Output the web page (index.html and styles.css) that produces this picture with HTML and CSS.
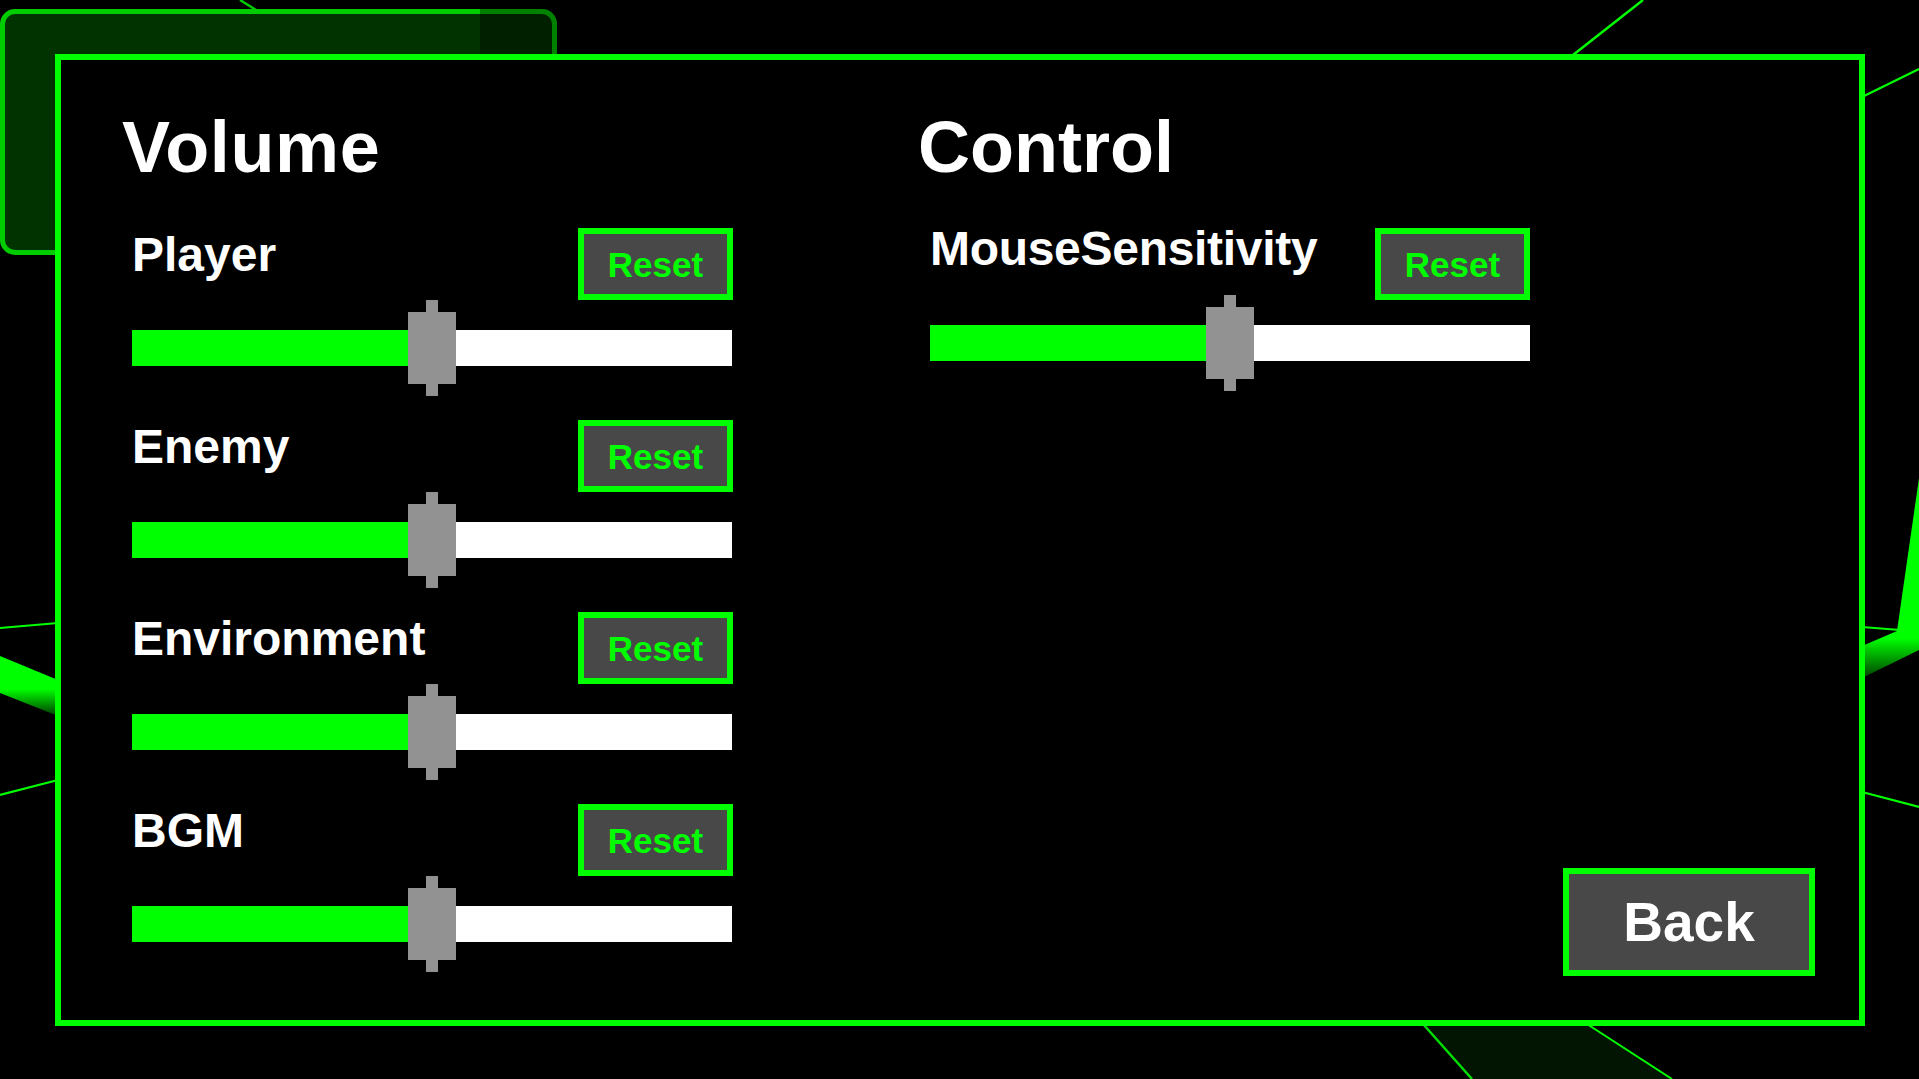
FILE: index.html
```html
<!DOCTYPE html>
<html lang="en">
<head>
<meta charset="utf-8">
<title>Settings</title>
<link rel="stylesheet" href="styles.css">
</head>
<body>
<div class="screen">
  <svg class="bg-art" width="1919" height="1079" viewBox="0 0 1919 1079" aria-hidden="true">
    <defs>
      <linearGradient id="bandL" x1="0" y1="0" x2="0" y2="1">
        <stop offset="0" stop-color="#00ff00"/>
        <stop offset="0.55" stop-color="#00ff00"/>
        <stop offset="1" stop-color="#003a00"/>
      </linearGradient>
      <linearGradient id="bandR" x1="0" y1="0" x2="0" y2="1">
        <stop offset="0" stop-color="#00ff00"/>
        <stop offset="0.8" stop-color="#00ff00"/>
        <stop offset="1" stop-color="#004000"/>
      </linearGradient>
    </defs>
    <line x1="240" y1="0" x2="256" y2="10" stroke="#00cc00" stroke-width="2.5"/>
    <line x1="1643" y1="0" x2="1573" y2="55" stroke="#00ff00" stroke-width="2.5"/>
    <line x1="1919" y1="69" x2="1862" y2="97" stroke="#00ff00" stroke-width="2.2"/>
    <line x1="0" y1="628" x2="58" y2="623" stroke="#00ff00" stroke-width="2.2"/>
    <polygon points="0,656 58,680 58,716 0,693" fill="url(#bandL)"/>
    <line x1="0" y1="795" x2="58" y2="780" stroke="#00ff00" stroke-width="2.2"/>
    <line x1="1862" y1="627" x2="1900" y2="630" stroke="#00ff00" stroke-width="2"/>
    <polygon points="1862,646 1897,631 1919,478 1919,650 1862,678" fill="url(#bandR)"/>
    <line x1="1862" y1="792" x2="1919" y2="807" stroke="#00ff00" stroke-width="2.2"/>
    <polygon points="1423,1024 1587,1024 1672,1079 1472,1079" fill="#021402"/>
    <line x1="1423" y1="1024" x2="1472" y2="1079" stroke="#00dd00" stroke-width="2.5"/>
    <line x1="1587" y1="1024" x2="1672" y2="1079" stroke="#00ff00" stroke-width="2"/>
  </svg>
  <div class="back-window"></div>
  <div class="back-window-shade"></div>

  <main class="panel">
    <section class="col col-volume">
      <h1 class="title">Volume</h1>
      <div class="rows">
        <div class="row">
          <div class="row-head">
            <span class="label">Player</span>
            <button class="reset">Reset</button>
          </div>
          <div class="slider">
            <div class="track"><div class="fill" style="width:50%"></div><div class="rest"></div></div>
            <div class="handle" style="left:50%"></div>
          </div>
        </div>
        <div class="row">
          <div class="row-head">
            <span class="label">Enemy</span>
            <button class="reset">Reset</button>
          </div>
          <div class="slider">
            <div class="track"><div class="fill" style="width:50%"></div><div class="rest"></div></div>
            <div class="handle" style="left:50%"></div>
          </div>
        </div>
        <div class="row">
          <div class="row-head">
            <span class="label">Environment</span>
            <button class="reset">Reset</button>
          </div>
          <div class="slider">
            <div class="track"><div class="fill" style="width:50%"></div><div class="rest"></div></div>
            <div class="handle" style="left:50%"></div>
          </div>
        </div>
        <div class="row">
          <div class="row-head">
            <span class="label">BGM</span>
            <button class="reset">Reset</button>
          </div>
          <div class="slider">
            <div class="track"><div class="fill" style="width:50%"></div><div class="rest"></div></div>
            <div class="handle" style="left:50%"></div>
          </div>
        </div>
      </div>
    </section>

    <section class="col col-control">
      <h1 class="title">Control</h1>
      <div class="rows">
        <div class="row">
          <div class="row-head">
            <span class="label label-up">MouseSensitivity</span>
            <button class="reset">Reset</button>
          </div>
          <div class="slider slider-up">
            <div class="track"><div class="fill" style="width:50%"></div><div class="rest"></div></div>
            <div class="handle" style="left:50%"></div>
          </div>
        </div>
      </div>
    </section>

    <div class="col-back">
      <button class="back">Back</button>
    </div>
  </main>
</div>
</body>
</html>
```

FILE: styles.css
```css
* { box-sizing: border-box; }

html, body {
  margin: 0;
  padding: 0;
  background: #000;
}

body {
  font-family: "Liberation Sans", Arial, sans-serif;
  font-weight: bold;
  color: #fff;
}

.screen {
  position: relative;
  width: 1919px;
  height: 1079px;
  overflow: hidden;
  background: #000;
  padding: 54px 0 0 55px;
}

.bg-art {
  position: absolute;
  left: 0;
  top: 0;
  z-index: 0;
}

.back-window {
  position: absolute;
  left: 0;
  top: 9px;
  width: 557px;
  height: 246px;
  border: 5px solid #00cc00;
  border-radius: 15px;
  background: #003300;
  z-index: 0;
}

.back-window-shade {
  position: absolute;
  left: 480px;
  top: 9px;
  width: 77px;
  height: 246px;
  border-radius: 0 15px 15px 0;
  background: rgba(0, 0, 0, 0.36);
  z-index: 0;
}

.panel {
  position: relative;
  z-index: 1;
  width: 1810px;
  height: 972px;
  border: 6px solid #00ff00;
  background: #000;
  display: flex;
  padding: 51px 44px 44px 61px;
}

.col {
  display: flex;
  flex-direction: column;
}

.col-volume {
  width: 611px;
}

.col-volume .rows {
  padding-left: 10px;
}

.col-control {
  width: 614px;
  margin-left: 185px;
}

.col-control .rows {
  padding-left: 12px;
}

.title {
  margin: 0 0 45px 0;
  font-size: 72px;
  line-height: 72px;
  height: 72px;
  font-weight: bold;
  color: #fff;
}

.col-volume .title {
  letter-spacing: 0.6px;
}

.rows {
  display: flex;
  flex-direction: column;
  gap: 24px;
}

.row {
  width: 601px;
  display: flex;
  flex-direction: column;
}

.col-control .row {
  width: 600px;
}

.row-head {
  display: flex;
  justify-content: space-between;
  align-items: flex-start;
  height: 72px;
}

.label {
  font-size: 48px;
  line-height: 48px;
  margin-top: 3px;
  white-space: nowrap;
}

.label-up {
  margin-top: -3px;
  letter-spacing: -0.3px;
}

.reset {
  width: 155px;
  height: 72px;
  border: 6px solid #00ff00;
  background: #484848;
  color: #00ff00;
  font-family: "Liberation Sans", Arial, sans-serif;
  font-weight: bold;
  font-size: 35px;
  line-height: 35px;
  padding: 0;
  display: flex;
  align-items: center;
  justify-content: center;
}

.slider {
  position: relative;
  width: 600px;
  height: 96px;
}

.slider-up {
  margin-top: -5px;
}

.track {
  display: flex;
  height: 36px;
  margin-top: 30px;
}

.fill {
  background: #00ff00;
}

.rest {
  flex: 1;
  background: #ffffff;
}

.handle {
  position: absolute;
  top: 12px;
  width: 48px;
  height: 72px;
  margin-left: -24px;
  background: #929292;
}

.handle::before {
  content: "";
  position: absolute;
  left: 18px;
  top: -12px;
  width: 12px;
  height: 96px;
  background: #929292;
}

.col-back {
  flex: 1;
  display: flex;
  justify-content: flex-end;
  align-items: flex-end;
}

.back {
  width: 252px;
  height: 108px;
  border: 6px solid #00ff00;
  background: #484848;
  color: #fff;
  font-family: "Liberation Sans", Arial, sans-serif;
  font-weight: bold;
  font-size: 55px;
  line-height: 55px;
  padding: 0;
  display: flex;
  align-items: center;
  justify-content: center;
}
```
